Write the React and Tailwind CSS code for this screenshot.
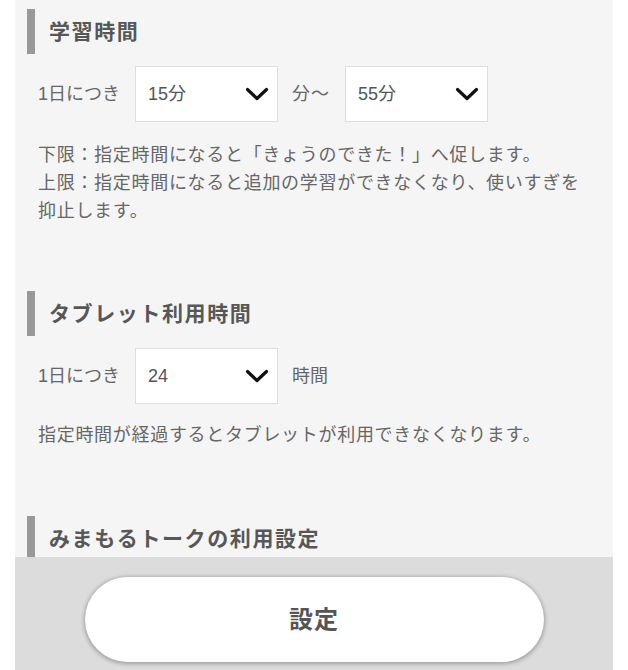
const font = { fontFamily: '"Liberation Sans", "Noto Sans CJK JP", sans-serif' }

function Chevron() {
  return (
    <svg width="24" height="16" viewBox="0 0 24 16" fill="none">
      <path d="M2.5 3.5 L12 12.5 L21.5 3.5" stroke="#111" strokeWidth="3.2" strokeLinecap="round" strokeLinejoin="round" />
    </svg>
  )
}

function Select({ value }) {
  return (
    <div className="w-[143px] h-[56px] bg-white border border-[#dedede] flex items-center justify-between pl-[12px] pr-[8px]">
      <span className="text-[18px] text-[#555]">{value}</span>
      <Chevron />
    </div>
  )
}

function Heading({ children }) {
  return (
    <div className="ml-[12px] h-[45px] border-l-[8px] border-[#999] flex items-center pl-[14px]">
      <span className="text-[21px] font-bold text-[#575757] tracking-[1.6px]">{children}</span>
    </div>
  )
}

export default function App() {
  return (
    <div className="h-[670px] w-[628px] bg-white flex flex-col overflow-hidden" style={font}>
      <div className="flex-1 mx-[15px] bg-[#f5f5f5] overflow-hidden pt-[9px]">
        <Heading>学習時間</Heading>
        <div className="mt-[12px] flex items-center px-[23px] text-[18px] text-[#666]">
          <span className="w-[97px]">1日につき</span>
          <Select value="15分" />
          <span className="ml-[14px] w-[53px] tracking-[1px]">分～</span>
          <Select value="55分" />
        </div>
        <div className="mt-[19px] px-[23px] text-[18px] leading-[28px] text-[#666] tracking-[0.7px]">
          <p>下限：指定時間になると「きょうのできた！」へ促します。</p>
          <p>上限：指定時間になると追加の学習ができなくなり、使いすぎを抑止します。</p>
        </div>

        <div className="mt-[66px]">
          <Heading>タブレット利用時間</Heading>
        </div>
        <div className="mt-[12px] flex items-center px-[23px] text-[18px] text-[#666]">
          <span className="w-[97px]">1日につき</span>
          <Select value="24" />
          <span className="ml-[14px]">時間</span>
        </div>
        <div className="mt-[17px] px-[23px] text-[18px] leading-[28px] text-[#666] tracking-[0.7px]">
          <p>指定時間が経過するとタブレットが利用できなくなります。</p>
        </div>

        <div className="mt-[67px]">
          <Heading>みまもるトークの利用設定</Heading>
        </div>
      </div>
      <div className="h-[113px] mx-[15px] bg-[#dcdcdc] pt-[20px] flex justify-center">
        <button className="w-[459px] h-[85px] rounded-full bg-white shadow-[0_1px_4px_1px_rgba(0,0,0,0.28)] text-[24px] font-bold text-[#555] tracking-[1px]">
          設定
        </button>
      </div>
    </div>
  )
}
